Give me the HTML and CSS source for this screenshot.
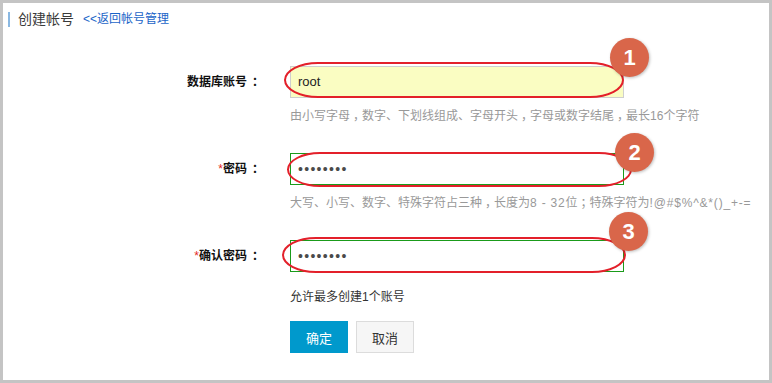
FILE: index.html
```html
<!DOCTYPE html>
<html lang="zh-CN">
<head>
<meta charset="utf-8">
<title>创建帐号</title>
<link rel="stylesheet" href="styles.css">
</head>
<body>
<div class="frame">
  <div class="header">
    <span class="title">创建帐号</span>
    <a class="back" href="#">&lt;&lt;返回帐号管理</a>
  </div>
  <div class="form">
    <div class="row">
      <div class="lbl">数据库账号<span class="colon">：</span></div>
      <div class="ctrl">
        <div class="field field-yellow">root</div>
        <span class="ring ring1"></span>
        <span class="badge badge1">1</span>
        <p class="hint">由小写字母<span class="cp">，</span>数字、下划线组成、字母开头<span class="cp">，</span>字母或数字结尾<span class="cp">，</span>最长16个字符</p>
      </div>
    </div>
    <div class="row">
      <div class="lbl"><span class="req">*</span>密码<span class="colon">：</span></div>
      <div class="ctrl">
        <div class="field field-ok dots">••••••••</div>
        <span class="ring ring2"></span>
        <span class="badge badge2">2</span>
        <p class="hint">大写、小写、数字、特殊字符占三种<span class="cp">，</span>长度为<span class="lat">8 - 32</span>位<span class="cp">；</span>特殊字符为<span class="lat">!@#$%^&amp;*()_+-=</span></p>
      </div>
    </div>
    <div class="row">
      <div class="lbl"><span class="req">*</span>确认密码<span class="colon">：</span></div>
      <div class="ctrl">
        <div class="field field-ok dots">••••••••</div>
        <span class="ring ring3"></span>
        <span class="badge badge3">3</span>
        <p class="note">允许最多创建1个账号</p>
        <div class="actions">
          <button class="btn btn-primary">确定</button>
          <button class="btn btn-default">取消</button>
        </div>
      </div>
    </div>
  </div>
</div>
</body>
</html>
```
FILE: styles.css
```css
* { box-sizing: border-box; }
html, body { margin: 0; padding: 0; background: #fff; }
body {
  font-family: "Liberation Sans", "Noto Sans CJK SC", sans-serif;
  font-size: 12px;
  color: #333;
}
.frame {
  width: 772px;
  height: 383px;
  border: 3px solid #c4c4c4;
  background: #fff;
  overflow: hidden;
}
.header {
  display: flex;
  align-items: center;
  margin: 9px 0 0 5px;
  border-left: 2px solid #8ab8e2;
  height: 15px;
  padding-left: 8px;
}
.title {
  font-size: 14px;
  line-height: 15px;
  color: #3a3a3a;
}
.back {
  margin-left: 9px;
  font-size: 12px;
  line-height: 15px;
  color: #1a64c8;
  text-decoration: none;
}
.form {
  margin-top: 39px;
  display: flex;
  flex-direction: column;
  gap: 28px;
}
.row {
  display: grid;
  grid-template-columns: 256px 334px;
  column-gap: 31px;
  align-items: start;
}
.lbl {
  text-align: right;
  font-weight: bold;
  font-size: 12px;
  line-height: 32px;
  color: #111;
}
.colon { padding-left: 5px; letter-spacing: -5px; }
.cp { padding-left: 3px; letter-spacing: -3px; }
.lat { letter-spacing: 0.8px; }
.req { color: #e4281e; font-weight: normal; }
.ctrl { position: relative; }
.field {
  height: 32px;
  border: 1px solid #cfcfcf;
  padding-left: 7px;
  line-height: 30px;
  font-size: 13px;
  color: #222;
  background: #fff;
}
.field-yellow { background: #fafdc2; }
.field-ok { border-color: #1a9b1a; }
.dots {
  font-size: 14px;
  letter-spacing: 1.3px;
  color: #4a4a4a;
}
.hint {
  margin: 9px 0 0;
  line-height: 18px;
  font-size: 12px;
  color: #999;
  white-space: nowrap;
}
.note {
  margin: 16px 0 0;
  line-height: 18px;
  font-size: 12px;
  color: #333;
}
.actions {
  display: flex;
  gap: 8px;
  margin-top: 15px;
}
.btn {
  width: 58px;
  height: 32px;
  font-family: inherit;
  font-size: 13px;
  padding: 0;
  cursor: pointer;
}
.btn-primary {
  background: #0099cc;
  border: 1px solid #0099cc;
  color: #fff;
}
.btn-default {
  background: #f6f6f6;
  border: 1px solid #dcdcdc;
  color: #333;
}
.ring {
  position: absolute;
  border: 2px solid #e3202a;
  border-radius: 34px / 18px;
  pointer-events: none;
}
.ring1 { left: -6px; top: -4px; width: 340px; height: 36px; }
.ring2 { left: -3px; top: -1px; width: 345px; height: 35px; }
.ring3 { left: -8px; top: -3px; width: 344px; height: 36px; }
.badge {
  position: absolute;
  width: 39px;
  height: 39px;
  border-radius: 50%;
  background: #d9664a;
  color: #fff;
  font-family: "Liberation Sans", Arial, sans-serif;
  font-weight: bold;
  font-size: 22px;
  line-height: 39px;
  text-align: center;
  box-shadow: 1px 1px 3px rgba(0, 0, 0, 0.25);
}
.badge1 { left: 320px; top: -28px; }
.badge2 { left: 325px; top: -20px; }
.badge3 { left: 319px; top: -28px; }
```
